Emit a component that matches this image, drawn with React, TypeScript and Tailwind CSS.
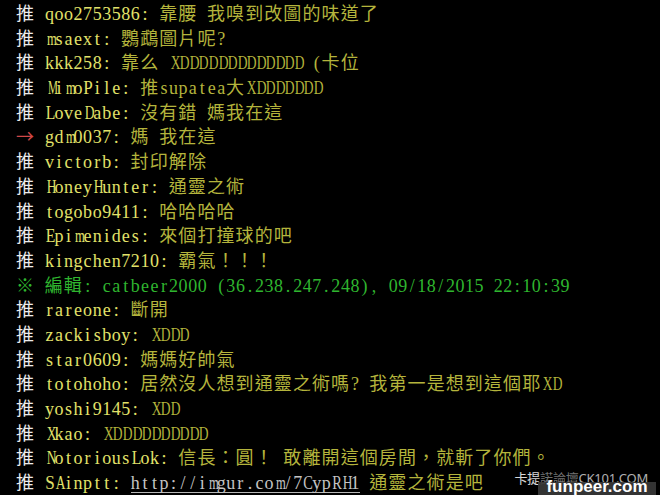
import React from "react";

type Row = { p: string; pc: "w" | "r" | "g"; u: string; c: string; url?: string; tail?: string };

const rows: Row[] = [
  { p: "推", pc: "w", u: "qoo2753586", c: "靠腰 我嗅到改圖的味道了" },
  { p: "推", pc: "w", u: "msaext", c: "鸚鵡圖片呢?" },
  { p: "推", pc: "w", u: "kkk258", c: "靠么 XDDDDDDDDDDDDD (卡位" },
  { p: "推", pc: "w", u: "MimoPile", c: "推supatea大XDDDDDDD" },
  { p: "推", pc: "w", u: "LoveDabe", c: "沒有錯 媽我在這" },
  { p: "→", pc: "r", u: "gdm0037", c: "媽 我在這" },
  { p: "推", pc: "w", u: "victorb", c: "封印解除" },
  { p: "推", pc: "w", u: "HoneyHunter", c: "通靈之術" },
  { p: "推", pc: "w", u: "togobo9411", c: "哈哈哈哈" },
  { p: "推", pc: "w", u: "Epimenides", c: "來個打撞球的吧" },
  { p: "推", pc: "w", u: "kingchen7210", c: "霸氣！！！" },
  { p: "※", pc: "g", u: "", c: "" },
  { p: "推", pc: "w", u: "rareone", c: "斷開" },
  { p: "推", pc: "w", u: "zackisboy", c: "XDDD" },
  { p: "推", pc: "w", u: "star0609", c: "媽媽好帥氣" },
  { p: "推", pc: "w", u: "totohoho", c: "居然沒人想到通靈之術嗎? 我第一是想到這個耶XD" },
  { p: "推", pc: "w", u: "yoshi9145", c: "XDD" },
  { p: "推", pc: "w", u: "Xkao", c: "XDDDDDDDDDD" },
  { p: "推", pc: "w", u: "NotoriousLok", c: "信長：圓！ 敢離開這個房間，就斬了你們。" },
  { p: "推", pc: "w", u: "SAinptt", c: "", url: "http://imgur.com/7CypRH1", tail: " 通靈之術是吧" },
];

const squeeze: Record<string, string> = {
  m: "scale-x-[0.7]",
  w: "scale-x-[0.75]",
  M: "scale-x-[0.62]",
  W: "scale-x-[0.58]",
  A: "scale-x-[0.75]",
  C: "scale-x-[0.8]",
  D: "scale-x-[0.75]",
  G: "scale-x-[0.75]",
  H: "scale-x-[0.75]",
  K: "scale-x-[0.75]",
  N: "scale-x-[0.75]",
  O: "scale-x-[0.75]",
  R: "scale-x-[0.8]",
  U: "scale-x-[0.75]",
  X: "scale-x-[0.75]",
  Y: "scale-x-[0.75]",
  B: "scale-x-[0.8]",
  E: "scale-x-[0.87]",
  L: "scale-x-[0.87]",
  P: "scale-x-[0.95]",
  S: "scale-x-[0.95]",
};

function T({ s, color }: { s: string; color: string }) {
  const parts: { w: boolean; t: string }[] = [];
  for (const ch of Array.from(s)) {
    const w = (ch.codePointAt(0) || 0) > 0x2000;
    const last = parts[parts.length - 1];
    if (last && last.w === w) last.t += ch;
    else parts.push({ w, t: ch });
  }
  return (
    <>
      {parts.map((p, i) =>
        p.w ? (
          <span
            key={i}
            className={`font-['Noto_Sans_CJK_TC',sans-serif] text-[18px] tracking-[1.1px] ${color}`}
          >
            {p.t}
          </span>
        ) : (
          <span key={i} className={`font-['Liberation_Serif','Liberation_Mono',serif] text-[18px] ${color}`}>
            {Array.from(p.t).map((ch, j) => (
              <span key={j} className="inline-block w-[9.55px] text-center">
                <span className={`inline-block ${squeeze[ch] || ""}`}>{ch === " " ? "\u00a0" : ch}</span>
              </span>
            ))}
          </span>
        )
      )}
    </>
  );
}

export default function App() {
  return (
    <div className="relative w-[660px] h-[495px] bg-black overflow-hidden">
      <div className="flex flex-col pl-[16px]">
        {rows.map((r, i) => (
          <div key={i} className="h-[24.7px] leading-[24.7px] whitespace-pre">
            {r.pc === "g" ? (
              <T s="※ 編輯: catbeer2000 (36.238.247.248), 09/18/2015 22:10:39" color="text-[#2fb52f]" />
            ) : (
              <>
                <T s={r.p + " "} color={r.pc === "r" ? "text-[#d04848]" : "text-[#ececec]"} />
                <T s={r.u + ": "} color="text-[#e2e26a]" />
                {r.url ? (
                  <>
                    <span className="inline-block leading-[18px] border-b border-[#b8b8b8]">
                      <T s={r.url} color="text-[#c4c4c4]" />
                    </span>
                    <T s={r.tail || ""} color="text-[#b4b43c]" />
                  </>
                ) : (
                  <T s={r.c} color="text-[#b4b43c]" />
                )}
              </>
            )}
          </div>
        ))}
      </div>
      <div className="absolute right-[12px] bottom-[10px] font-['Noto_Sans','Noto_Sans_CJK_TC',sans-serif] text-[13px] leading-[14px] text-white/85 tracking-[-0.2px]">
        卡提<span className="text-white/45">諾論壇</span>
        <span className="text-white/70">CK101.COM</span>
      </div>
      <div className="absolute right-[4px] bottom-0 h-[13px] w-[118px] bg-[#3a3a3a]/90 flex items-start justify-center overflow-visible">
        <span className="font-['Liberation_Sans',sans-serif] font-bold text-[17px] leading-[17px] text-white -mt-[4px]">
          funpeer.com
        </span>
      </div>
    </div>
  );
}
